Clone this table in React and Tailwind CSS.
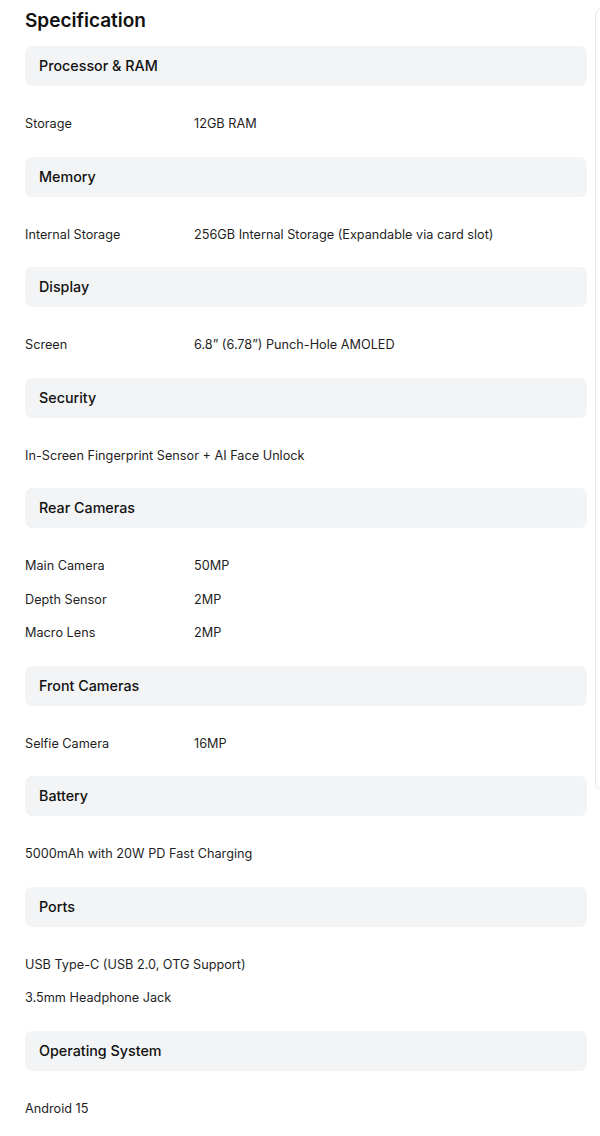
import React from "react";

const sections = [
  { title: "Processor & RAM", rows: [["Storage", "12GB RAM"]] },
  { title: "Memory", rows: [["Internal Storage", "256GB Internal Storage (Expandable via card slot)"]] },
  { title: "Display", rows: [["Screen", "6.8\u201D (6.78\u201D) Punch-Hole AMOLED"]] },
  { title: "Security", rows: [["In-Screen Fingerprint Sensor + AI Face Unlock"]] },
  {
    title: "Rear Cameras",
    rows: [
      ["Main Camera", "50MP"],
      ["Depth Sensor", "2MP"],
      ["Macro Lens", "2MP"],
    ],
  },
  { title: "Front Cameras", rows: [["Selfie Camera", "16MP"]] },
  { title: "Battery", rows: [["5000mAh with 20W PD Fast Charging"]] },
  { title: "Ports", rows: [["USB Type-C (USB 2.0, OTG Support)"], ["3.5mm Headphone Jack"]] },
  { title: "Operating System", rows: [["Android 15"]] },
];

export default function App() {
  return (
    <div
      className="w-[600px] h-[1136px] overflow-hidden bg-white flex text-[#1f1f1f]"
      style={{ fontFamily: "Inter, 'Noto Sans', sans-serif" }}
    >
      <div className="w-[587px] shrink-0 pl-[25px] pt-[7px]">
        <h2 className="text-[19px] leading-[28px] font-semibold text-[#111] mb-[11px]">Specification</h2>
        <div className="flex flex-col">
          {sections.map((s) => (
            <div key={s.title}>
              <div className="h-[40px] rounded-[7px] bg-[#f3f4f6] flex items-center px-[14px] text-[14.3px] font-medium text-[#111]">
                {s.title}
              </div>
              <div className="flex flex-col gap-[13.5px] pt-[28px] pb-[22.5px]">
                {s.rows.map((r, i) => (
                  <div key={i} className="flex text-[12.7px] leading-[20px] text-[#1f1f1f]">
                    {r.length === 2 ? (
                      <>
                        <span className="w-[169px] shrink-0">{r[0]}</span>
                        <span>{r[1]}</span>
                      </>
                    ) : (
                      <span>{r[0]}</span>
                    )}
                  </div>
                ))}
              </div>
            </div>
          ))}
        </div>
      </div>
      <div className="ml-[8px] mt-[6px] w-[40px] h-[786px] shrink-0 border border-[#e5e7eb] rounded-[10px]" />
    </div>
  );
}
